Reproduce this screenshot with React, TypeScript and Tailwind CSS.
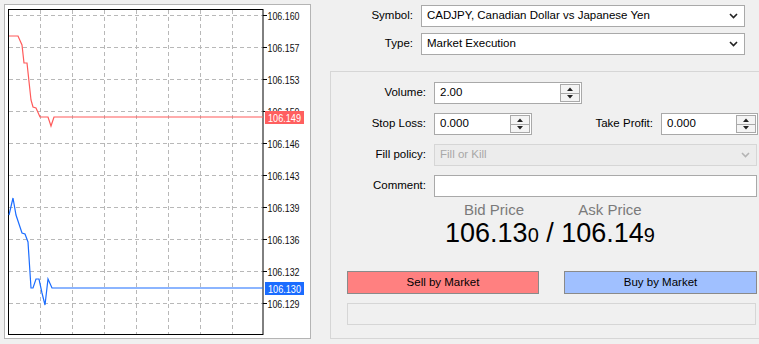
// Trade order window: tick chart on the left, order form on the right

const gridY = [15, 47, 79, 111, 143, 175, 207, 239, 271, 303];
const gridX = [40, 72, 104, 136, 168, 200, 232];
const levels = [
  "106.160",
  "106.157",
  "106.153",
  "106.150",
  "106.146",
  "106.143",
  "106.139",
  "106.136",
  "106.132",
  "106.129",
];

const askLine =
  "9,36 18,36 22,45 24,63 27,63 31,100 33,107 36,108 40,117 48,117 51,126 54,117 263,117";
const bidLine =
  "9,215 13,198 16,215 22,233 25,234 28,242 31,288 33,288 36,279 39,279 42,293 45,305 48,279 52,288 263,288";

const axisFont = '"Liberation Sans", Arial, sans-serif';

export default function App() {
  return (
    <div
      className="flex h-[344px] w-[759px] overflow-hidden bg-[#f0f0f0] text-[11.5px] text-black"
      style={{ fontFamily: '"Liberation Sans", Arial, sans-serif' }}
    >
      <div className="ml-[4px] mt-[4px] h-[335px] w-[307px] shrink-0 border border-[#b4b4b4] bg-white">
        <TickChart />
      </div>

      <div className="ml-[19px] flex w-[440px] shrink-0 flex-col">
        {/* Symbol / type */}
        <div className="mt-[5px] flex flex-col gap-[6px]">
          <Row label="Symbol:" labelWidth="w-[91px]">
            <Select value="CADJPY, Canadian Dollar vs Japanese Yen" width="w-[324px]" />
          </Row>
          <Row label="Type:" labelWidth="w-[91px]">
            <Select value="Market Execution" width="w-[324px]" />
          </Row>
        </div>

        {/* Order group */}
        <div className="mt-[16px] h-[268px] w-[440px] border border-[#d6d6d6]">
          <div className="mt-[10px] flex flex-col gap-[9px]">
            <Row label="Volume:" labelWidth="w-[103px]">
              <SpinInput value="2.00" width="w-[148px]" />
            </Row>
            <Row label="Stop Loss:" labelWidth="w-[103px]">
              <SpinInput value="0.000" width="w-[98px]" />
              <span className="w-[129px] shrink-0 pr-[8px] text-right">Take Profit:</span>
              <SpinInput value="0.000" width="w-[97px]" />
            </Row>
            <Row label="Fill policy:" labelWidth="w-[103px]">
              <Select value="Fill or Kill" width="w-[323px]" disabled />
            </Row>
            <Row label="Comment:" labelWidth="w-[103px]">
              <div className="h-[22px] w-[323px] border border-[#a9a9a9] bg-white" />
            </Row>
          </div>

          {/* Prices */}
          <div
            className="ml-[94px] mt-[5px] flex w-[250px] flex-col items-center"
            style={{ fontFamily: '"Liberation Sans", Helvetica, Arial, sans-serif' }}
          >
            <div className="flex w-full text-[15px] leading-[15px] text-[#7a7a7a]">
              <span className="w-[138px] text-center">Bid Price</span>
              <span className="w-[94px] text-center">Ask Price</span>
            </div>
            <div className="mt-[3px] whitespace-nowrap text-[27px] leading-[27px] text-black">
              106.13<span className="text-[20px]">0</span> / 106.14
              <span className="text-[20px]">9</span>
            </div>
          </div>

          <div className="ml-[16px] mt-[22px] flex gap-[25px]">
            <button className="h-[23px] w-[192px] border border-[#8a8a8a] bg-[#ff8080] text-[11.5px]">
              Sell by Market
            </button>
            <button className="h-[23px] w-[193px] border border-[#8a8a8a] bg-[#a0c0ff] text-[11.5px]">
              Buy by Market
            </button>
          </div>
          <div className="ml-[16px] mt-[9px] h-[22px] w-[409px] border border-[#d6d6d6]" />
        </div>
      </div>
    </div>
  );
}

// ============= Partials ============= //
function Row({
  label,
  labelWidth,
  children,
}: {
  label: string;
  labelWidth: string;
  children: React.ReactNode;
}) {
  return (
    <div className="flex h-[22px] items-center">
      <span className={"shrink-0 pr-[8px] text-right " + labelWidth}>{label}</span>
      {children}
    </div>
  );
}

function Select({
  value,
  width,
  disabled = false,
}: {
  value: string;
  width: string;
  disabled?: boolean;
}) {
  return (
    <div
      className={
        "flex h-[22px] shrink-0 items-center justify-between border pl-[5px] pr-[6px] " +
        width +
        (disabled
          ? " border-[#d6d6d6] bg-[#ececec] text-[#a8a8a8]"
          : " border-[#a9a9a9] bg-white text-black")
      }
    >
      <span>{value}</span>
      <svg width="9" height="6" viewBox="0 0 9 6">
        <path
          d="M1 1 L4.5 4.5 L8 1"
          fill="none"
          stroke={disabled ? "#b4b4b4" : "#222"}
          strokeWidth="1.6"
        />
      </svg>
    </div>
  );
}

function SpinInput({ value, width }: { value: string; width: string }) {
  return (
    <div
      className={
        "flex h-[22px] shrink-0 items-center justify-between border border-[#a9a9a9] bg-white pl-[5px] " +
        width
      }
    >
      <span>{value}</span>
      <div className="mr-px flex h-[18px] w-[20px] flex-col border border-[#a9a9a9] bg-[#f4f4f4]">
        <div className="flex flex-1 items-center justify-center border-b border-[#a9a9a9]">
          <svg width="6" height="4" viewBox="0 0 6 4">
            <path d="M0 4 L3 0.5 L6 4 Z" fill="#222" />
          </svg>
        </div>
        <div className="flex flex-1 items-center justify-center">
          <svg width="6" height="4" viewBox="0 0 6 4">
            <path d="M0 0 L3 3.5 L6 0 Z" fill="#222" />
          </svg>
        </div>
      </div>
    </div>
  );
}

function TickChart() {
  return (
    <svg width="305" height="333" viewBox="5 5 305 333" className="block">
      {/* grid */}
      {gridY.map((y) => (
        <line
          key={"h" + y}
          x1="9"
          x2="263"
          y1={y + 0.5}
          y2={y + 0.5}
          stroke="#b8b8b8"
          strokeDasharray="4 3"
        />
      ))}
      {gridX.map((x) => (
        <line
          key={"v" + x}
          x1={x + 0.5}
          x2={x + 0.5}
          y1="10"
          y2="334"
          stroke="#b8b8b8"
          strokeDasharray="4 3"
        />
      ))}

      {/* frame */}
      <rect x="8.5" y="9.5" width="254.5" height="325" fill="none" stroke="#000" />

      {/* axis ticks + labels */}
      {gridY.map((y, i) => (
        <g key={"l" + y}>
          <line x1="263" x2="267" y1={y + 0.5} y2={y + 0.5} stroke="#000" />
          <text
            x="267.5"
            y={y + 4.5}
            fontSize="11"
            fill="#111"
            fontFamily={axisFont}
            textLength="32"
            lengthAdjust="spacingAndGlyphs"
          >
            {levels[i]}
          </text>
        </g>
      ))}

      {/* ask line, its label box sits over the 106.150 level */}
      <polyline points={askLine} fill="none" stroke="#ff5a5a" strokeWidth="1.2" />
      <rect x="265" y="111" width="39" height="13" fill="#ff5f5f" />
      <text
        x="268"
        y="121.5"
        fontSize="11"
        fill="#fff"
        fontFamily={axisFont}
        textLength="33"
        lengthAdjust="spacingAndGlyphs"
      >
        106.149
      </text>

      {/* bid line */}
      <polyline points={bidLine} fill="none" stroke="#1a6cff" strokeWidth="1.2" />
      <rect x="265" y="282" width="39" height="13" fill="#1a6cff" />
      <text
        x="268"
        y="292.5"
        fontSize="11"
        fill="#fff"
        fontFamily={axisFont}
        textLength="33"
        lengthAdjust="spacingAndGlyphs"
      >
        106.130
      </text>
    </svg>
  );
}
